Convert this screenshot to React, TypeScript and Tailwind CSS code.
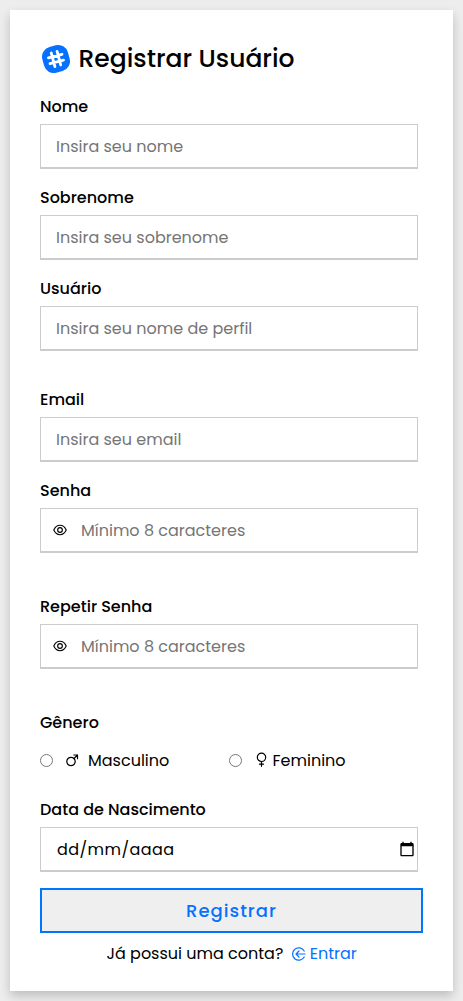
type FieldProps = {
  id: string;
  label: string;
  placeholder: string;
  password?: boolean;
  className?: string;
};

function LogoIcon() {
  return (
    <svg viewBox="0 0 28 28" className="size-7 shrink-0">
      <g transform="rotate(-15 14 14)">
        <rect x="0.75" y="0.75" width="26.500" height="26.500" rx="10" fill="#0571ff" />
        <path d="M11 7v14M17 7v14M7 11h14M7 17h14" fill="none" stroke="#fff" strokeWidth="2.800" strokeLinecap="round" />
      </g>
    </svg>
  );
}

function EyeIcon() {
  return (
    <svg viewBox="0 0 24 24" className="ml-[10.5px] size-4 shrink-0" fill="none" stroke="currentColor" strokeWidth="1.700">
      <path d="M2.700 12C4.800 7.200 8.300 4.900 12 4.900S19.200 7.200 21.300 12c-2.100 4.800-5.600 7.100-9.300 7.100S4.800 16.800 2.700 12z" strokeLinejoin="round" />
      <circle cx="12" cy="12" r="3.500" />
    </svg>
  );
}

function MaleIcon() {
  return (
    <svg viewBox="0 0 16 16" className="ml-3 size-4 shrink-0" fill="none" stroke="currentColor" strokeWidth="1.200">
      <circle cx="6" cy="9.500" r="4.200" />
      <path d="M9 6.500 12.500 3M8.800 3h3.700v3.700" strokeLinecap="round" strokeLinejoin="round" />
    </svg>
  );
}

function FemaleIcon() {
  return (
    <svg viewBox="0 0 16 16" className="ml-[11px] size-4 shrink-0" fill="none" stroke="currentColor" strokeWidth="1.200">
      <circle cx="8.500" cy="5.300" r="4.200" />
      <path d="M8.500 9.500v4.800M6.500 12.200h4" strokeLinecap="round" />
    </svg>
  );
}

function SignInIcon() {
  return (
    <svg viewBox="0 0 16 16" className="size-4 shrink-0" fill="none" stroke="currentColor" strokeWidth="1.200" strokeLinecap="round" strokeLinejoin="round">
      <path d="M13.200 5A6.200 6.200 0 1 0 13.200 11" />
      <path d="M14 8H5M8 5 5 8l3 3" />
    </svg>
  );
}

function Field({ id, label, placeholder, password, className = "" }: FieldProps) {
  return (
    <div className={`w-[378px] ${className}`}>
      <label htmlFor={id} className="mb-[5px] block w-fit pt-px text-base leading-6 font-medium whitespace-nowrap">
        {label}
      </label>
      <div className="flex h-[45px] items-center border border-b-2 border-[#ccc] bg-white">
        {password && <EyeIcon />}
        <input
          id={id}
          type={password ? "password" : "text"}
          placeholder={placeholder}
          className={`h-full min-w-0 flex-1 bg-transparent text-base outline-none placeholder:text-[#757575] ${password ? "pl-[13.5px]" : "pl-[15px]"}`}
        />
      </div>
    </div>
  );
}

const radio = "m-0 size-[13px] shrink-0";

export default function App() {
  return (
    <main className="h-[1001px] w-[463px] overflow-hidden bg-[#ededed] p-2.5 font-[Poppins,Inter,sans-serif] text-black">
      <form className="h-[981px] bg-white px-[30px] pt-[31px] shadow-[0_5px_10px_rgba(0,0,0,0.2)]">
        <h1 className="flex h-9 items-center pl-0.5 text-[25px] font-medium whitespace-nowrap">
          <LogoIcon />
          <span className="ml-[8.5px]">Registrar Usuário</span>
        </h1>

        <Field id="nome" label="Nome" placeholder="Insira seu nome" className="mt-[17px]" />
        <Field id="sobrenome" label="Sobrenome" placeholder="Insira seu sobrenome" className="mt-4" />
        <Field id="usuario" label="Usuário" placeholder="Insira seu nome de perfil" className="mt-4" />
        <Field id="email" label="Email" placeholder="Insira seu email" className="mt-9" />
        <Field id="senha" label="Senha" placeholder="Mínimo 8 caracteres" className="mt-4" password />
        <Field id="repetir" label="Repetir Senha" placeholder="Mínimo 8 caracteres" className="mt-[41px]" password />

        <fieldset className="mt-[41px]">
          <legend className="pt-px text-base leading-6 font-medium">Gênero</legend>
          <div className="mt-[13px] flex h-6 items-center text-base">
            <label className="flex w-[189px] items-center">
              <input type="radio" name="genero" className={radio} />
              <MaleIcon />
              <span className="ml-[7px] pt-0.5">Masculino</span>
            </label>
            <label className="flex items-center">
              <input type="radio" name="genero" className={radio} />
              <FemaleIcon />
              <span className="ml-[3.5px] pt-0.5">Feminino</span>
            </label>
          </div>
        </fieldset>

        <div className="mt-[25px] w-[378px]">
          <div className="pt-px text-base leading-6 font-medium">Data de Nascimento</div>
          <div className="mt-[5px] flex h-[45px] items-center justify-between border border-b-2 border-[#ccc] pr-0.5 pl-4">
            <span className="pt-0.5 text-base tracking-[0.45px]">dd/mm/aaaa</span>
            <svg viewBox="0 0 24 24" className="size-4 shrink-0" fill="currentColor">
              <path d="M20 3h-1V1h-2v2H7V1H5v2H4c-1.100 0-2 .9-2 2v16c0 1.100.9 2 2 2h16c1.100 0 2-.9 2-2V5c0-1.100-.9-2-2-2zm0 18H4V8h16v13z" />
            </svg>
          </div>
        </div>

        <button type="button" className="mt-4 block h-[45px] w-[383px] border-2 border-[#0075ff] bg-[#efefef] text-lg font-medium tracking-[1px] text-[#0571ff]">
          Registrar
        </button>

        <p className="mt-[9px] flex h-6 w-[383px] items-center pl-[66.5px] text-base whitespace-nowrap">
          <span>Já possui uma conta?</span>
          <a href="#" className="ml-[7.5px] flex items-center text-[#0571ff]">
            <SignInIcon />
            <span className="ml-[3px]">Entrar</span>
          </a>
        </p>
      </form>
    </main>
  );
}
